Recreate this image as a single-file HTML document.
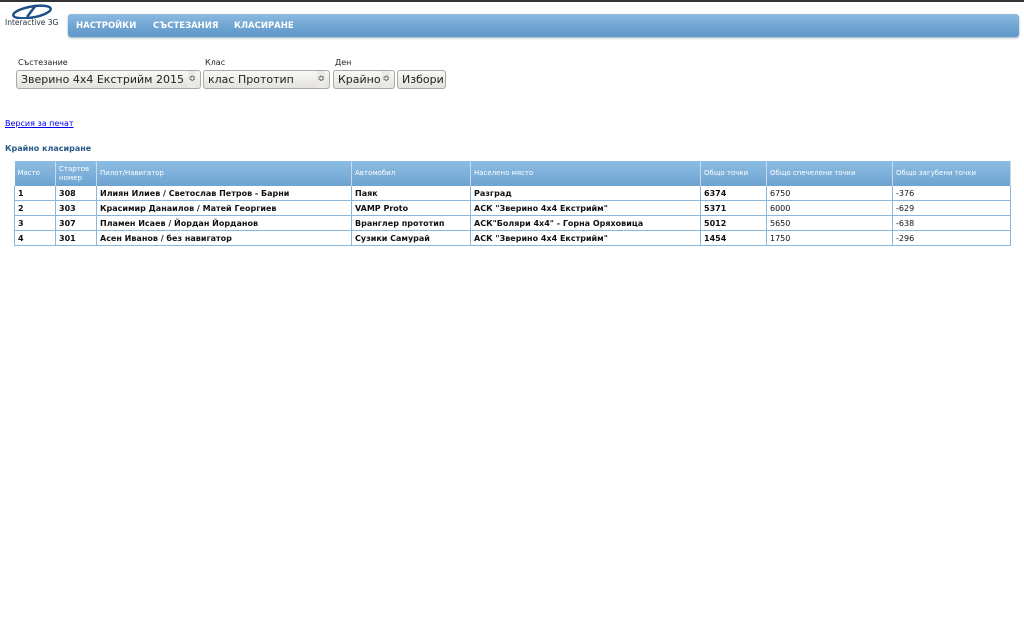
<!DOCTYPE html>
<html><head><meta charset="utf-8"><style>
body{margin:0;width:1024px;height:640px;background:#fff;font-family:"DejaVu Sans","Liberation Sans",sans-serif;position:relative;overflow:hidden}
.topline{position:absolute;left:0;top:0;width:1024px;height:2px;background:#333}
.logo{position:absolute;left:5px;top:3px;width:56px;height:24px}
.logo .t{position:absolute;left:0;top:15px;font-size:7.5px;color:#234;white-space:nowrap}
.nav{position:absolute;left:68px;top:14px;width:951px;height:23px;border-radius:3px;background:linear-gradient(#8cbbe0,#6fa4d2 55%,#5f97c9);box-shadow:0 1px 2px #9ab}
.nav span{position:absolute;top:7px;color:#fff;font-weight:bold;font-size:8.5px}
.lbl{position:absolute;top:58px;font-size:8px;color:#222}
.sel{position:absolute;top:70px;height:19px;border:1px solid #aaa;border-radius:3px;background:linear-gradient(#f8f8f6,#e4e2de);box-sizing:border-box;font-size:11px;line-height:17px;padding-left:4px;color:#222;white-space:nowrap;overflow:hidden}
.sel i{position:absolute;right:4px;top:0;font-style:normal;font-size:9px;color:#444;background:#eceae6}
a{position:absolute;left:5px;top:119px;font-size:8px;color:#00e;text-decoration:underline}
h4{position:absolute;left:5px;top:144px;margin:0;font-size:8px;color:#2a5a8a}
table{position:absolute;left:14px;top:161px;border-collapse:collapse;font-size:8px;width:996px;table-layout:fixed}
th{background:linear-gradient(#8dbde2,#6ea4d2);color:#fff;font-weight:normal;text-align:left;height:25px;padding:0 3px;font-size:7px;line-height:9px;border-right:1px solid #c4daee}
td{height:14px;padding:0 3px;border:1px solid #8db6dc;border-top:none;color:#111;white-space:nowrap;overflow:hidden}
td.b{font-weight:bold}
</style></head><body>
<div class="topline"></div>
<div class="logo"><svg width="56" height="16" viewBox="0 0 56 16"><ellipse cx="27" cy="9" rx="19" ry="5.5" fill="none" stroke="#1d4f8a" stroke-width="2.5" transform="rotate(-10 27 9)"/><path d="M22 14 L31 2" stroke="#1d4f8a" stroke-width="2.5"/></svg><div class="t">Interactive 3G</div></div>
<div class="nav"><span style="left:8px">НАСТРОЙКИ</span><span style="left:85px">СЪСТЕЗАНИЯ</span><span style="left:166px">КЛАСИРАНЕ</span></div>
<div class="lbl" style="left:18px">Състезание</div>
<div class="lbl" style="left:205px">Клас</div>
<div class="lbl" style="left:335px">Ден</div>
<div class="sel" style="left:16px;width:185px">Зверино 4x4 Екстрийм 2015<i>≎</i></div>
<div class="sel" style="left:203px;width:127px">клас Прототип<i>≎</i></div>
<div class="sel" style="left:333px;width:62px">Крайно<i>≎</i></div>
<div class="sel" style="left:397px;width:49px">Избори</div>
<a>Версия за печат</a>
<h4>Крайно класиране</h4>
<table>
<colgroup><col style="width:41px"><col style="width:41px"><col style="width:255px"><col style="width:119px"><col style="width:230px"><col style="width:66px"><col style="width:126px"><col style="width:118px"></colgroup>
<tr><th>Място</th><th>Стартов<br>номер</th><th>Пилот/Навигатор</th><th>Автомобил</th><th>Населено място</th><th>Общо точки</th><th>Общо спечелени точки</th><th>Общо загубени точки</th></tr>
<tr><td class="b">1</td><td class="b">308</td><td class="b">Илиян Илиев / Светослав Петров - Барни</td><td class="b">Паяк</td><td class="b">Разград</td><td class="b">6374</td><td>6750</td><td>-376</td></tr>
<tr><td class="b">2</td><td class="b">303</td><td class="b">Красимир Данаилов / Матей Георгиев</td><td class="b">VAMP Proto</td><td class="b">АСК "Зверино 4x4 Екстрийм"</td><td class="b">5371</td><td>6000</td><td>-629</td></tr>
<tr><td class="b">3</td><td class="b">307</td><td class="b">Пламен Исаев / Йордан Йорданов</td><td class="b">Вранглер прототип</td><td class="b">АСК"Боляри 4x4" - Горна Оряховица</td><td class="b">5012</td><td>5650</td><td>-638</td></tr>
<tr><td class="b">4</td><td class="b">301</td><td class="b">Асен Иванов / без навигатор</td><td class="b">Сузики Самурай</td><td class="b">АСК "Зверино 4x4 Екстрийм"</td><td class="b">1454</td><td>1750</td><td>-296</td></tr>
</table>
</body></html>
